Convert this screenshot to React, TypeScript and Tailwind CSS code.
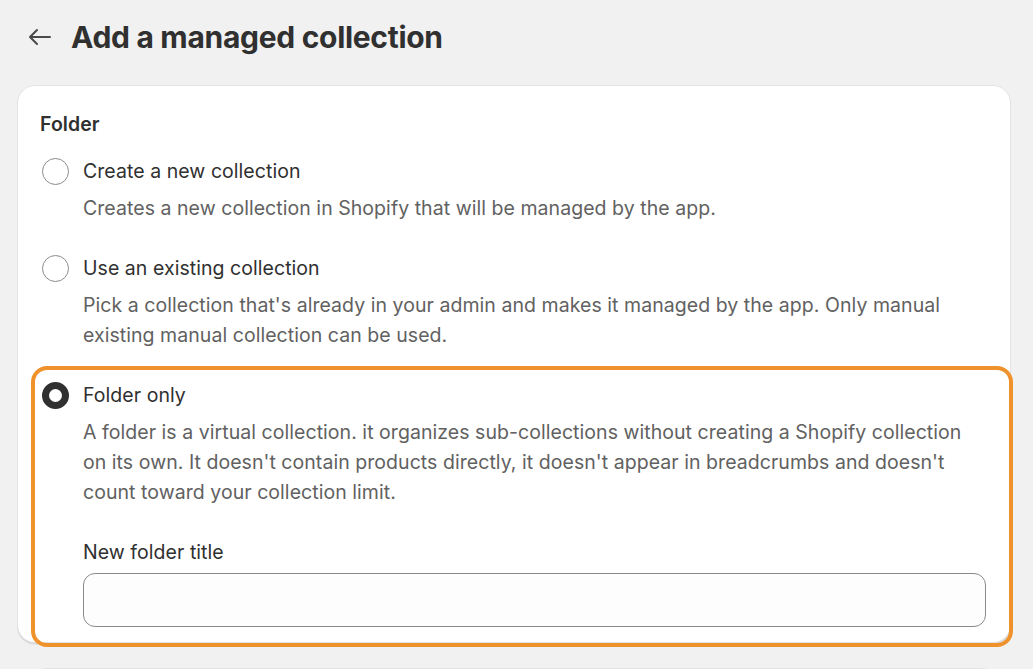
const OPTIONS = [
  {
    id: "new",
    label: "Create a new collection",
    help: "Creates a new collection in Shopify that will be managed by the app.",
  },
  {
    id: "existing",
    label: "Use an existing collection",
    help: "Pick a collection that's already in your admin and makes it managed by the app. Only manual existing manual collection can be used.",
  },
];

function Radio({ checked }: { checked?: boolean }) {
  return checked ? (
    <span className="block w-[27px] h-[27px] shrink-0 rounded-full border-[7.5px] border-[#303030] bg-white" />
  ) : (
    <span className="block w-[27px] h-[27px] shrink-0 rounded-full border-[1.5px] border-[#8a8a8a] bg-white" />
  );
}

export default function App() {
  return (
    <div
      className="min-h-screen bg-[#f1f1f1] text-[#303030] overflow-hidden"
      style={{ fontFamily: "Inter, 'Noto Sans', sans-serif" }}
    >
      {/* Header */}
      <div className="flex items-center gap-[19px] pl-[28px] pt-[16px] h-[58px]">
        <svg width="24" height="18" viewBox="0 0 24 18" fill="none" stroke="#4a4a4a" strokeWidth="2" strokeLinecap="round" strokeLinejoin="round">
          <path d="M22 9H2M9 2L2 9l7 7" />
        </svg>
        <h1 className="text-[30px] leading-[40px] font-bold tracking-[-0.3px] text-[#303030]">
          Add a managed collection
        </h1>
      </div>

      {/* Card */}
      <div className="relative ml-[17px] mt-[27px] w-[994px] bg-white rounded-[18px] border border-[#e3e3e3] shadow-[0_1.5px_0_rgba(0,0,0,0.1)] px-[24px] pt-[23px] pb-[15px] tracking-[0.05px]">
        <div className="-ml-[2px] text-[19.5px] leading-[30px] font-semibold">Folder</div>

        <div className="mt-[17px] flex flex-col gap-[30px]">
          {OPTIONS.map((o) => (
            <div key={o.id}>
              <div className="flex items-center gap-[14px] h-[30px]">
                <Radio />
                <span className="text-[19.5px] leading-[30px]">{o.label}</span>
              </div>
              <p className="mt-[7px] ml-[41px] text-[19.5px] leading-[30px] text-[#616161]">
                {o.help}
              </p>
            </div>
          ))}

          <div>
            <div className="flex items-center gap-[14px] h-[30px]">
              <Radio checked />
              <span className="text-[19.5px] leading-[30px]">Folder only</span>
            </div>
            <p className="mt-[7px] ml-[41px] text-[19.5px] leading-[30px] text-[#616161]">
              A folder is a virtual collection. it organizes sub-collections without creating a Shopify collection on its own. It doesn't contain products directly, it doesn't appear in breadcrumbs and doesn't count toward your collection limit.
            </p>
            <div className="ml-[41px] mt-[30px]">
              <label className="block text-[19.5px] leading-[30px]">New folder title</label>
              <input
                type="text"
                className="mt-[6px] block w-full h-[54px] rounded-[12px] border-[1.5px] border-[#8a8a8a] bg-[#fdfdfd] px-[18px] text-[19.5px] outline-none"
              />
            </div>
          </div>
        </div>

        {/* Highlight overlay */}
        <div className="pointer-events-none absolute left-[13px] -right-[3px] top-[280px] -bottom-[5px] rounded-[16px] border-[4.5px] border-[#f0922b]" />
      </div>

      {/* Next card edge */}
      <div className="ml-[30px] mt-[25px] w-[970px] h-[20px] bg-white border-t border-[#e3e3e3] rounded-t-[18px]" />
    </div>
  );
}
